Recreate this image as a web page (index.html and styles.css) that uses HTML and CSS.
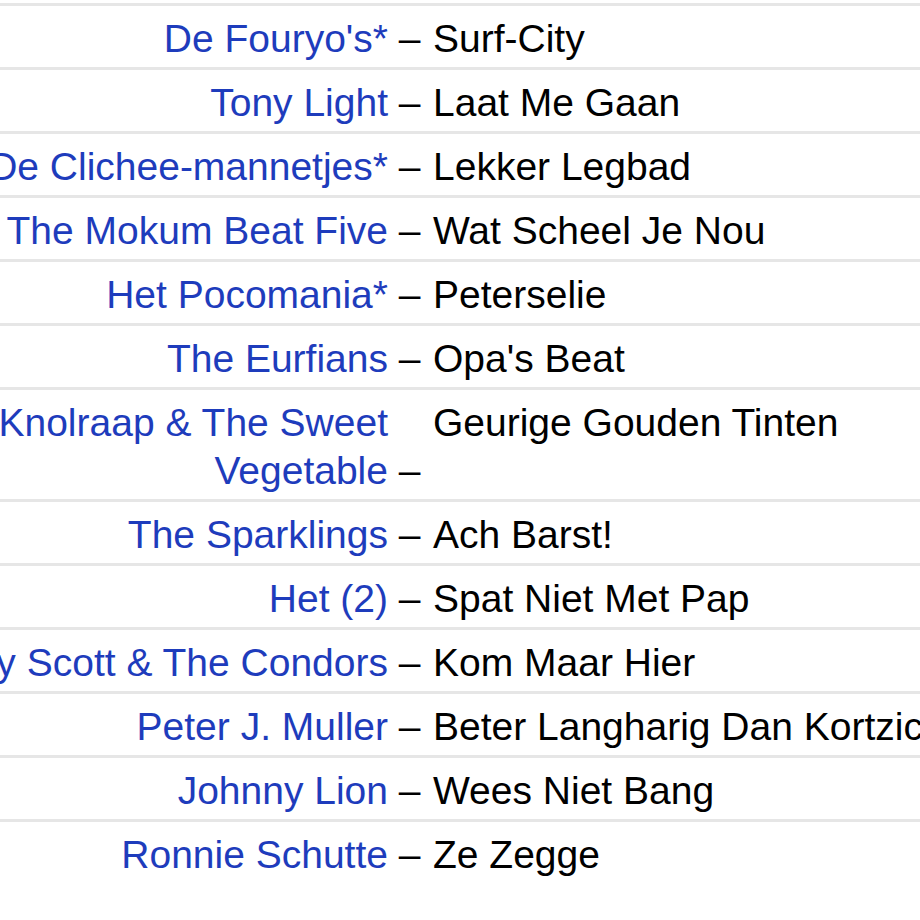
FILE: index.html
```html
<!DOCTYPE html>
<html>
    <head>
        <title>Tracklist</title>
        <link rel="stylesheet" href="styles.css">
    </head>
    <body>
        <div class="page">
            <table class="tracklist">
                <tr>
                    <td class="artist"><a href="#">De Fouryo's*</a><span class="dash">&nbsp;–</span></td>
                    <td class="title">Surf-City</td>
                </tr>
                <tr>
                    <td class="artist"><a href="#">Tony Light</a><span class="dash">&nbsp;–</span></td>
                    <td class="title">Laat Me Gaan</td>
                </tr>
                <tr>
                    <td class="artist"><a href="#">De Clichee-mannetjes*</a><span class="dash">&nbsp;–</span></td>
                    <td class="title">Lekker Legbad</td>
                </tr>
                <tr>
                    <td class="artist"><a href="#">The Mokum Beat Five</a><span class="dash">&nbsp;–</span></td>
                    <td class="title">Wat Scheel Je Nou</td>
                </tr>
                <tr>
                    <td class="artist"><a href="#">Het Pocomania*</a><span class="dash">&nbsp;–</span></td>
                    <td class="title">Peterselie</td>
                </tr>
                <tr>
                    <td class="artist"><a href="#">The Eurfians</a><span class="dash">&nbsp;–</span></td>
                    <td class="title">Opa's Beat</td>
                </tr>
                <tr>
                    <td class="artist"><a href="#">Knolraap &amp; The Sweet Vegetable</a><span class="dash">&nbsp;–</span></td>
                    <td class="title">Geurige Gouden Tinten</td>
                </tr>
                <tr>
                    <td class="artist"><a href="#">The Sparklings</a><span class="dash">&nbsp;–</span></td>
                    <td class="title">Ach Barst!</td>
                </tr>
                <tr>
                    <td class="artist"><a href="#">Het (2)</a><span class="dash">&nbsp;–</span></td>
                    <td class="title">Spat Niet Met Pap</td>
                </tr>
                <tr>
                    <td class="artist"><a href="#">Ray Scott &amp; The Condors</a><span class="dash">&nbsp;–</span></td>
                    <td class="title">Kom Maar Hier</td>
                </tr>
                <tr>
                    <td class="artist"><a href="#">Peter J. Muller</a><span class="dash">&nbsp;–</span></td>
                    <td class="title">Beter Langharig Dan Kortzichtig</td>
                </tr>
                <tr>
                    <td class="artist"><a href="#">Johnny Lion</a><span class="dash">&nbsp;–</span></td>
                    <td class="title">Wees Niet Bang</td>
                </tr>
                <tr>
                    <td class="artist"><a href="#">Ronnie Schutte</a><span class="dash">&nbsp;–</span></td>
                    <td class="title">Ze Zegge</td>
                </tr>
            </table>
        </div>
    </body>
</html>
```

FILE: styles.css
```css
body{
    font-family: "Liberation Sans", Arial, sans-serif;
    margin: 0;
    padding: 0;
    background: #fff;
    color: #000;
    overflow: hidden;
}

.page{
    padding-top: 3px;
    margin-left: -122px;
}

.tracklist{
    border-collapse: collapse;
    table-layout: fixed;
    width: 1110px;
    font-size: 39px;
    line-height: 48px;
}

.tracklist tr{
    border-top: 3px solid #e6e6e6;
}

.tracklist td{
    vertical-align: top;
    padding: 9px 0 4px 0;
}

.tracklist td.artist{
    width: 510px;
    text-align: right;
}

.artist a{
    color: #1e3cbc;
    text-decoration: none;
}

.dash{
    margin-right: -0.834em;
}

.tracklist td.title{
    padding-left: 45px;
    white-space: nowrap;
}
```
